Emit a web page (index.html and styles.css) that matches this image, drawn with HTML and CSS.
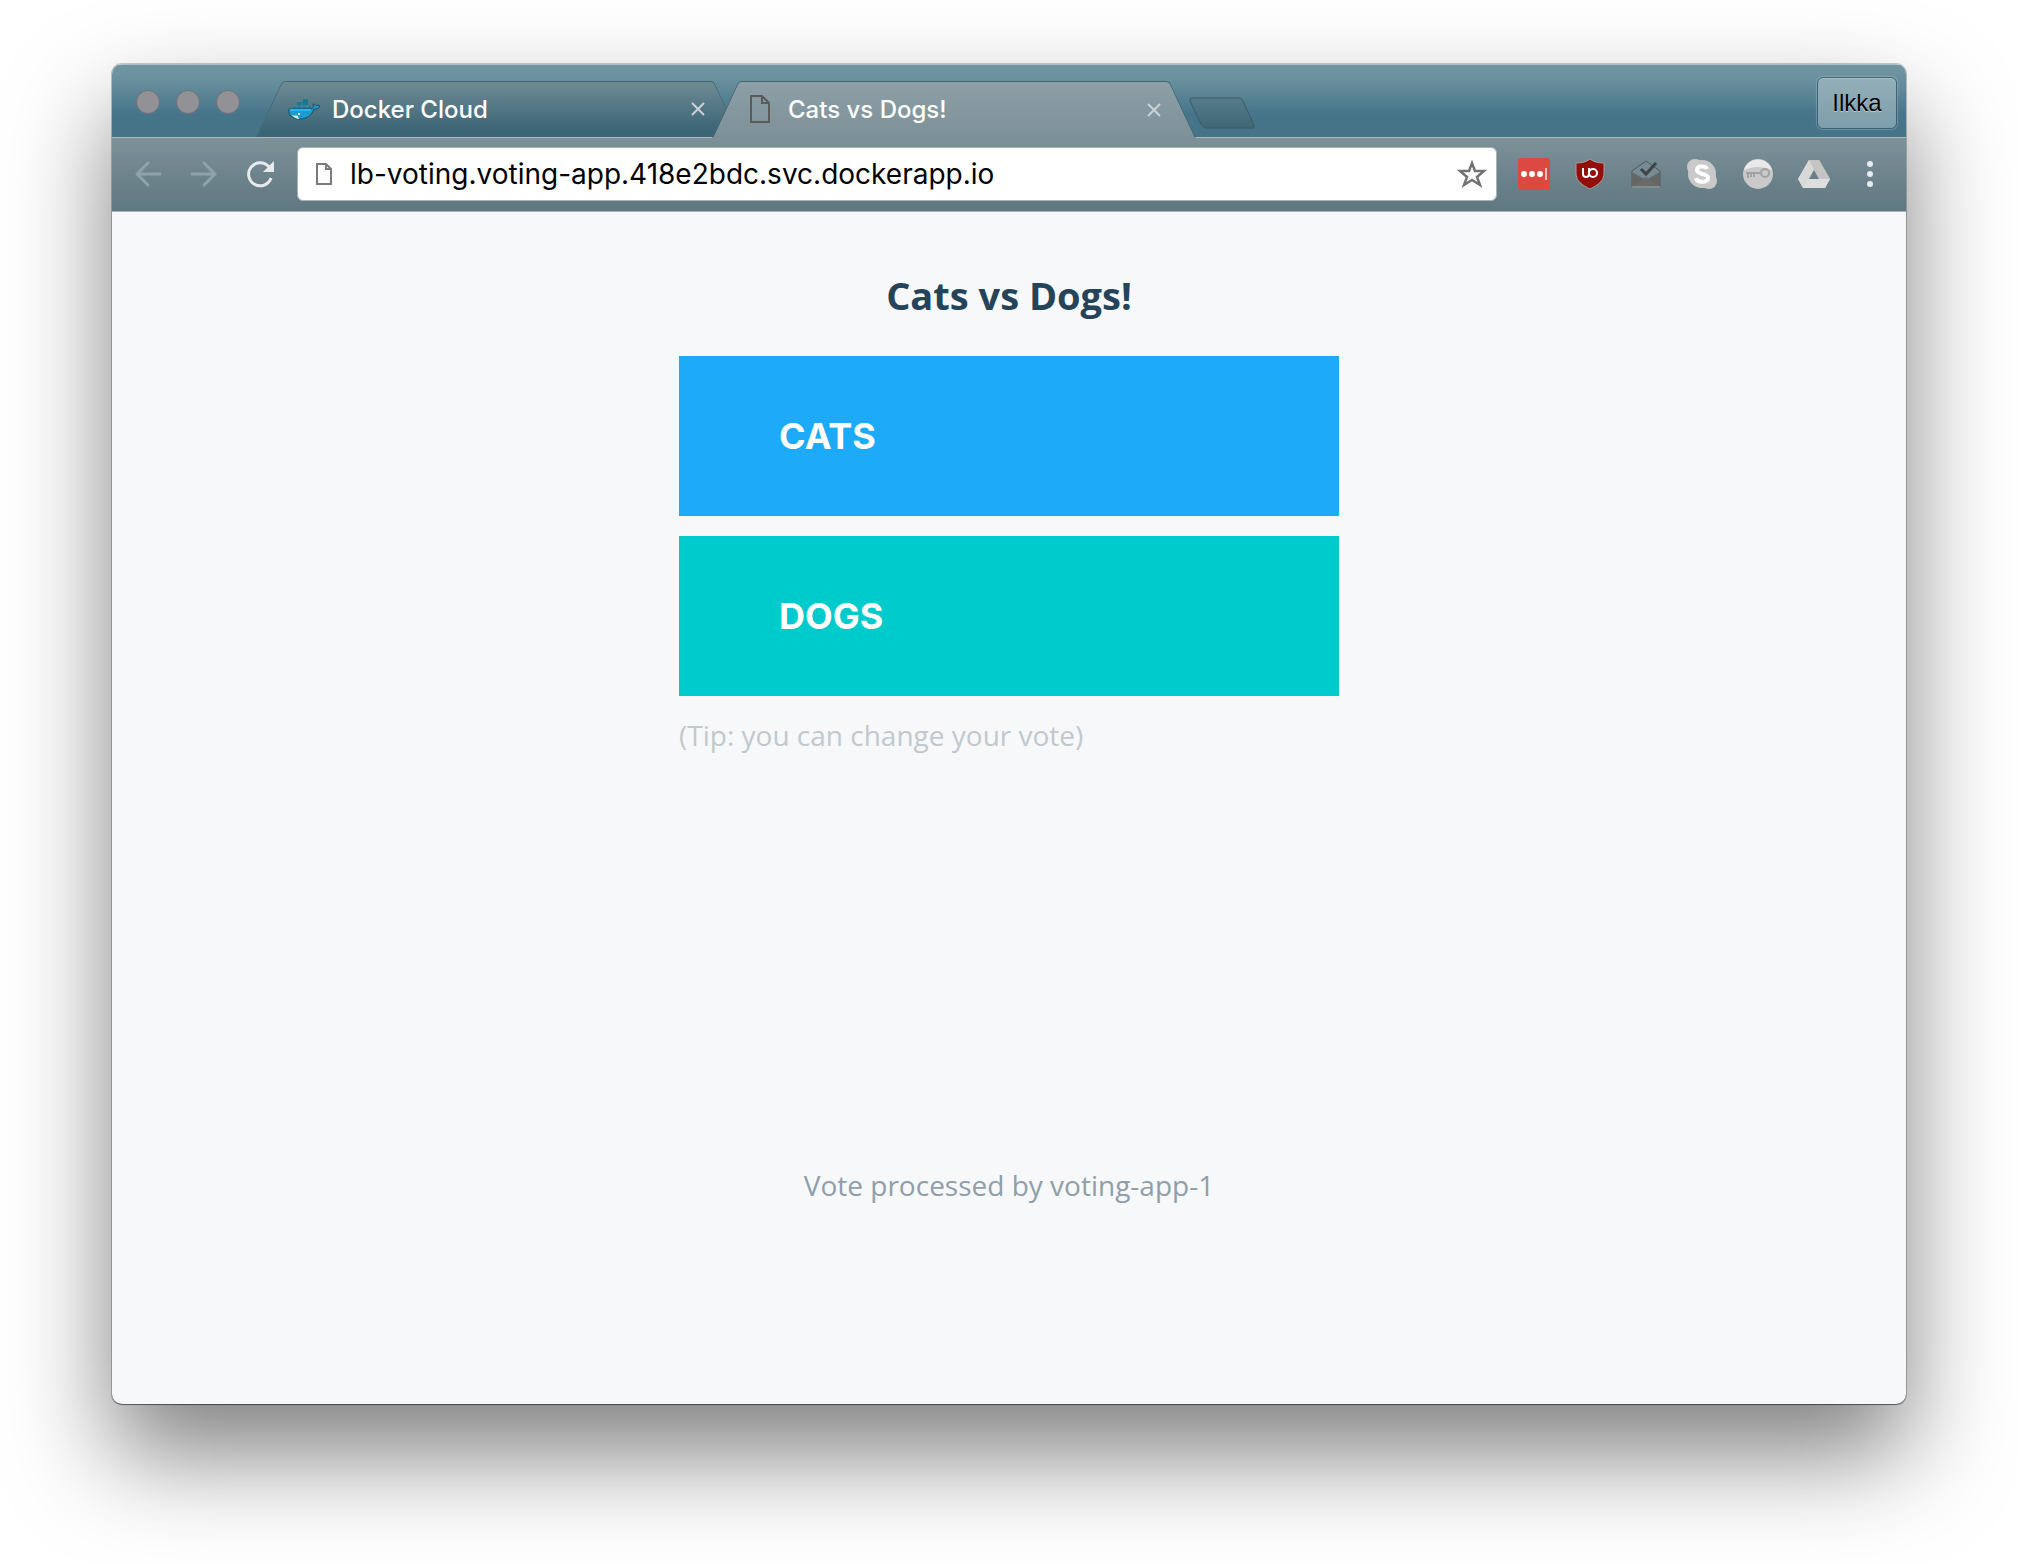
FILE: index.html
```html
<!DOCTYPE html>
<html lang="en">
<head>
<meta charset="utf-8">
<meta name="viewport" content="width=device-width, initial-scale=1">
<title>Cats vs Dogs!</title>
<link rel="stylesheet" href="styles.css">
</head>
<body>
<div class="window">
  <header class="tab-strip">
    <div class="lights">
      <button class="light" aria-label="Close window"></button>
      <button class="light" aria-label="Minimize window"></button>
      <button class="light" aria-label="Zoom window"></button>
    </div>
    <div class="tabs">
      <div class="tab">
        <svg class="tab-icon" viewBox="0 0 32 32" aria-hidden="true">
          <path d="M5 17v-4h4V9h6V6h5v7h3v5H5z" fill="#1b7892"/>
          <path d="M9 13v4M14 10v7M19 12v5M5 13h17" stroke="#3590a6" stroke-width="1" fill="none"/>
          <path d="M1 16h22c2 0 3-2 2-5 2 0 3 1 3 2 1-1 3-1 4 0-1 3-4 3-6 3-2 6-7 10-14 10C4 26 0 22 1 16z" fill="#1c9bd1" stroke="#1c5268" stroke-width="1"/>
          <path d="M2 17h21" stroke="#23b8ee" stroke-width="2"/>
          <path d="M4 22c3 1 5 0 6 1 0 1 0 2 2 3-4 0-7-2-8-4z" fill="#dde8e8"/>
          <circle cx="11" cy="21" r="1" fill="#fff"/>
        </svg>
        <span class="tab-title">Docker Cloud</span>
        <button class="tab-close" aria-label="Close Docker Cloud"><svg width="14" height="14" viewBox="0 0 14 14"><path d="M1 1l12 12M13 1L1 13"/></svg></button>
      </div>
      <div class="tab tab-active">
        <svg class="tab-icon" viewBox="0 0 32 32" aria-hidden="true"><path d="M7 2h11l7 7v19H7zM18 2v7h7" fill="none" stroke="#5b5b5b" stroke-width="2"/></svg>
        <span class="tab-title">Cats vs Dogs!</span>
        <button class="tab-close" aria-label="Close Cats vs Dogs!"><svg width="14" height="14" viewBox="0 0 14 14"><path d="M1 1l12 12M13 1L1 13"/></svg></button>
      </div>
      <button class="new-tab" aria-label="New tab">
        <svg width="68" height="34" viewBox="0 0 68 34">
          <defs><linearGradient id="new-tab-fill" x1="0" y1="0" x2="0" y2="1"><stop offset="0" stop-color="#567c8a"/><stop offset="1" stop-color="#3d6676"/></linearGradient></defs>
          <path d="M4 2h47q3 0 4 3l11 24q2 3-2 3H18q-3 0-5-4L2 5Q1 2 4 2z" fill="url(#new-tab-fill)" stroke="#3b5b67"/>
        </svg>
      </button>
    </div>
    <button class="profile">Ilkka</button>
  </header>

  <nav class="toolbar" aria-label="Browser toolbar">
    <button class="tool" aria-label="Back"><svg viewBox="0 0 32 32"><path d="M28 16H5M16 5L5 16l11 11" fill="none" stroke="#8fa2a9" stroke-width="3" stroke-linecap="round"/></svg></button>
    <button class="tool" aria-label="Forward"><svg viewBox="0 0 32 32"><path d="M4 16h23M16 5l11 11-11 11" fill="none" stroke="#8fa2a9" stroke-width="3" stroke-linecap="round"/></svg></button>
    <button class="tool" aria-label="Reload"><svg viewBox="0 0 32 32"><path d="M25 9A11.500 11.500 0 1 0 27 20" fill="none" stroke="#e7ebed" stroke-width="3"/><path d="M30 3v11H19z" fill="#e7ebed"/></svg></button>
    <div class="address">
      <svg width="16" height="22" viewBox="0 0 16 22" aria-hidden="true"><path d="M1 1h9l5 5v15H1zM10 1v5h5" fill="none" stroke="#7b7b7b" stroke-width="2"/></svg>
      <input class="url" type="text" aria-label="Address" value="lb-voting.voting-app.418e2bdc.svc.dockerapp.io" spellcheck="false">
      <button class="star" aria-label="Bookmark this page"><svg width="30" height="30" viewBox="0 0 30 30"><path d="M15 4l3 8 9 0-7 6 3 8-8-5-8 5 3-8-7-6 9 0z" fill="none" stroke="#737373" stroke-width="2.500"/></svg></button>
    </div>
    <button class="tool" aria-label="LastPass"><svg viewBox="0 0 32 32"><rect width="32" height="32" rx="3" fill="#dc4942"/><g fill="#fff"><circle cx="6" cy="16" r="3"/><circle cx="14" cy="16" r="3"/><circle cx="22" cy="16" r="3"/></g><path d="M28 10v12" stroke="#f2b9b6" stroke-width="2"/></svg></button>
    <button class="tool" aria-label="uBlock Origin"><svg viewBox="0 0 32 32"><path d="M16 1c4 3 8 4 14 4v10c0 8-6 12-14 16C8 27 2 23 2 15V5c6 0 10-1 14-4z" fill="#930f0c" stroke="#a99a9b" stroke-width="1"/><path d="M9 10v6a3 3 0 0 0 6 0v-6" fill="none" stroke="#fff" stroke-width="2"/><circle cx="19" cy="15" r="4" fill="none" stroke="#fff" stroke-width="2"/></svg></button>
    <button class="tool" aria-label="Inbox"><svg viewBox="0 0 32 32"><path d="M2 13L16 3l14 10v16H2z" fill="#758c94" stroke="#51585b"/><path d="M2 14l14 8 14-8v15H2z" fill="#666"/><path d="M2 29l14-10 14 10z" fill="#6b6b6b"/><path d="M11 11l5 5L26 5" fill="none" stroke="#404346" stroke-width="3"/><path d="M2 29h28" stroke="#aaa"/></svg></button>
    <button class="tool" aria-label="Skype"><svg viewBox="0 0 32 32"><g fill="#c9c9c9"><circle cx="16" cy="16" r="14"/><circle cx="9" cy="9" r="8"/><circle cx="23" cy="23" r="8"/></g><path d="M21 11c-1-3-10-4-10 1s11 3 11 8-11 5-12 0" fill="none" stroke="#fff" stroke-width="4"/></svg></button>
    <button class="tool" aria-label="Key manager"><svg viewBox="0 0 32 32"><circle cx="16" cy="16" r="15" fill="#c9c9c9"/><path d="M2 12C6-2 26-2 30 12 20 8 12 8 2 12z" fill="#e9e9e9"/><circle cx="23" cy="15" r="4" fill="none" stroke="#a2a2a2" stroke-width="2"/><path d="M19 15H4M6 15v5M9 15v4M12 15v4" fill="none" stroke="#a2a2a2" stroke-width="2"/></svg></button>
    <button class="tool" aria-label="Google Drive"><svg viewBox="0 0 32 32"><path d="M11 2h10l11 19-5 9H5L0 21z" fill="#cfcfcf"/><path d="M11 2l5 9-11 19-5-9z" fill="#d9d9d9"/><path d="M11 2h10l11 19H21z" fill="#c4c4c4"/><path d="M10 21h22l-5 9H5z" fill="#dedede"/><path d="M16 12l5 9H11z" fill="#697f88"/></svg></button>
    <button class="tool" aria-label="Menu"><svg viewBox="0 0 32 32" fill="#e7ebed"><circle cx="16" cy="6" r="3"/><circle cx="16" cy="16" r="3"/><circle cx="16" cy="26" r="3"/></svg></button>
  </nav>

  <main class="page">
    <form class="poll" onsubmit="return false">
      <h1 class="poll-title">Cats vs Dogs!</h1>
      <button class="choice choice-a" type="submit" name="vote" value="a">CATS</button>
      <button class="choice choice-b" type="submit" name="vote" value="b">DOGS</button>
      <p class="tip">(Tip: you can change your vote)</p>
    </form>
    <p class="processed">Vote processed by voting-app-1</p>
  </main>
</div>
</body>
</html>
```
FILE: styles.css
```css
* {
  box-sizing: border-box;
}

body {
  margin: 0;
  min-height: 100vh;
  padding: 64px 112px 160px;
  display: flex;
  background: #fff;
  font-family: Inter, "Liberation Sans", sans-serif;
}

button {
  margin: 0;
  padding: 0;
  border: 0;
  background: none;
  font-family: inherit;
  display: flex;
  align-items: center;
  justify-content: center;
}

.window {
  flex: 1;
  min-width: 0;
  display: flex;
  flex-direction: column;
  overflow: hidden;
  border-radius: 10px;
  background: #f7f8fa;
  box-shadow: 0 1px 1px rgba(0, 0, 0, 0.4), 0 0 0 1px rgba(0, 0, 0, 0.2), 0 50px 100px rgba(0, 0, 0, 0.5);
}

.tab-strip {
  height: 74px;
  display: flex;
  align-items: flex-end;
  padding: 0 9px 0 24px;
  border-top: 1px solid #aebfc5;
  border-bottom: 1px solid #a9b9bf;
  background: linear-gradient(#7096a3, #6b919f 18%, #46758a 68%, #457487);
}

.lights {
  display: flex;
  gap: 16px;
  padding-bottom: 23px;
}

.light {
  width: 24px;
  height: 24px;
  border: 1px solid #6e7277;
  border-radius: 50%;
  background: #929196;
}

.tabs {
  flex: 1;
  min-width: 0;
  display: flex;
  align-items: flex-end;
  margin-left: 16px;
}

.tab {
  position: relative;
  z-index: 0;
  flex: 0 1 484px;
  min-width: 0;
  height: 56px;
  display: flex;
  align-items: center;
  padding: 0 35px 0 32px;
  color: #fff;
  font-size: 24px;
  font-weight: 500;
  --tab-fill: linear-gradient(#6e8b94, #3b6475 90%);
}

/* Each half of a tab leans inward to form the trapezoid. */
.tab::before,
.tab::after {
  content: "";
  position: absolute;
  z-index: -1;
  top: 0;
  bottom: 0;
  width: 51%;
  border-top: 1px solid #456571;
  background: var(--tab-fill);
}

.tab::before {
  left: 0;
  border-left: 1px solid #456571;
  border-top-left-radius: 4px;
  transform: skewX(-25deg);
  transform-origin: bottom left;
}

.tab::after {
  right: 0;
  border-right: 1px solid #456571;
  border-top-right-radius: 4px;
  transform: skewX(25deg);
  transform-origin: bottom right;
}

.tab-active {
  z-index: 1;
  height: 57px;
  margin: 0 0 -1px -28px;
  --tab-fill: linear-gradient(#8e9fa6, #7d9198);
}

.tab-icon {
  flex: none;
  width: 32px;
  height: 32px;
}

.tab-title {
  flex: 1;
  min-width: 0;
  margin-left: 12px;
  overflow: hidden;
  white-space: nowrap;
}

.tab-close svg {
  fill: none;
  stroke: #ccd1d4;
  stroke-width: 2;
}

.new-tab {
  margin: 0 0 7px -8px;
}

.profile {
  width: 80px;
  height: 52px;
  margin-bottom: 8px;
  border: 1px solid #3d6272;
  border-radius: 6px;
  background: linear-gradient(#94afb9, #7d9eab);
  box-shadow: 0 0 1px 1px rgba(255, 255, 255, 0.2), inset 0 1px 0 #a9bfc7;
  color: #000;
  font-family: "Liberation Sans", Arial, sans-serif;
  font-size: 24px;
  text-shadow: 0 1px 1px rgba(255, 255, 255, 0.5);
}

.toolbar {
  height: 74px;
  display: flex;
  align-items: center;
  padding: 0 8px 2px;
  border-bottom: 1px solid #a4b1b6;
  background: linear-gradient(#7d9198, #5f7781);
}

.tool {
  flex: none;
  width: 56px;
  height: 56px;
}

.tool svg {
  width: 32px;
  height: 32px;
}

.address {
  flex: 1;
  min-width: 0;
  height: 54px;
  display: flex;
  align-items: center;
  margin: 0 9px;
  padding: 0 9px 0 18px;
  border: 1px solid #a9b1b4;
  border-radius: 6px;
  background: #fff;
}

.url {
  flex: 1;
  min-width: 0;
  margin-left: 18px;
  padding: 0;
  border: 0;
  outline: 0;
  background: none;
  color: #000;
  font-family: inherit;
  font-size: 28px;
}

.page {
  flex: 1;
  display: flex;
  flex-direction: column;
  align-items: center;
  padding: 55px 24px;
  font-family: "Open Sans", sans-serif;
}

.poll {
  width: 100%;
  max-width: 660px;
  display: flex;
  flex-direction: column;
}

.poll-title {
  margin: 0 0 33px;
  color: #25445a;
  font-size: 38px;
  font-weight: 700;
  line-height: 56px;
  text-align: center;
}

.choice {
  height: 160px;
  margin-bottom: 20px;
  padding-left: 100px;
  justify-content: flex-start;
  color: #fff;
  font-family: Inter, sans-serif;
  font-size: 36px;
  font-weight: 700;
}

.choice-a {
  background: #1caaf9;
}

.choice-b {
  background: #00cbcc;
}

.tip,
.processed {
  margin: 0;
  font-size: 28px;
  line-height: 38px;
}

.tip {
  color: #c0c9cd;
}

.processed {
  margin-top: 412px;
  color: #8f9fa9;
}
```
